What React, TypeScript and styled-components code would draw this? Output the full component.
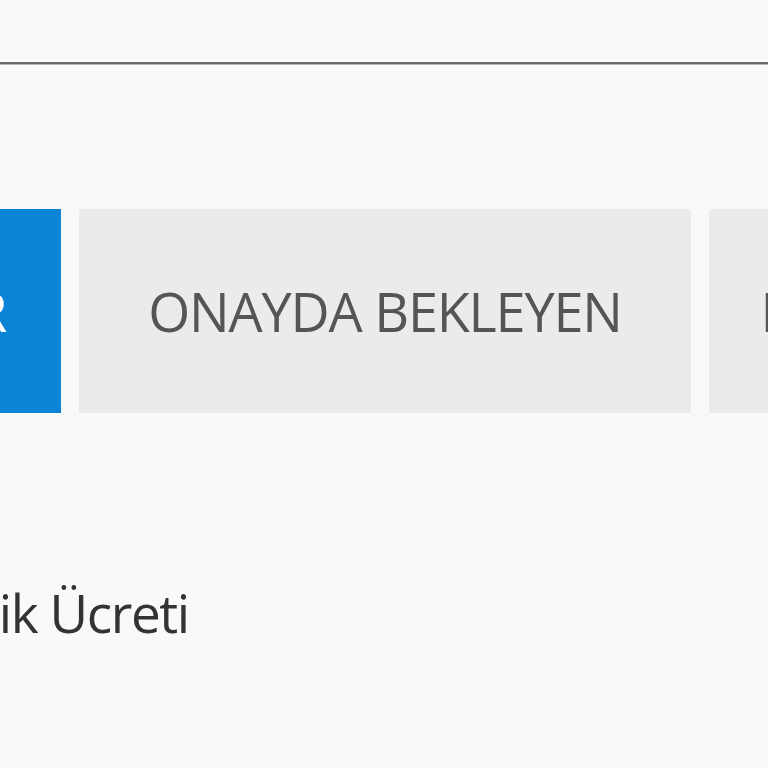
import React from 'react';
import styled, { createGlobalStyle } from 'styled-components';

const GlobalStyle = createGlobalStyle`
  html, body {
    margin: 0;
    padding: 0;
    background: #f9f9f9;
    overflow: hidden;
  }
  body {
    font-family: "Open Sans", "Liberation Sans", sans-serif;
  }
`;

const Page = styled.div`
  width: 768px;
  height: 768px;
  overflow: hidden;
  background: #f9f9f9;
`;

const TopBar = styled.div`
  height: 62px;
  border-bottom: 2px solid #6a6a6a;
  box-shadow: 0 1px 0 #b5b5b5;
  background: #fafafa;
`;

const TabRow = styled.div`
  display: flex;
  gap: 18px;
  margin: 145px 0 0 -551px;
  width: max-content;
`;

const Tab = styled.div<{ $active?: boolean }>`
  width: 612px;
  height: 204px;
  display: flex;
  align-items: center;
  justify-content: center;
  font-size: 54px;
  letter-spacing: -1.2px;
  background: ${p => (p.$active ? '#0b84d6' : '#ebebeb')};
  color: ${p => (p.$active ? '#ffffff' : '#555555')};
  white-space: nowrap;
`;

const Label = styled.div`
  margin: 163px 0 0 -104px;
  font-size: 53px;
  letter-spacing: -1.4px;
  color: #333333;
  white-space: nowrap;
`;

const App: React.FC = () => {
  const tabs = [
    { id: 1, title: 'YAYINDAKİ KAYITLAR', active: true },
    { id: 2, title: 'ONAYDA BEKLEYEN' },
    { id: 3, title: 'BİLDİRİLEN KAYITLAR' }
  ];

  return (
    <Page>
      <GlobalStyle />
      <TopBar />
      <TabRow>
        {tabs.map(tab => (
          <Tab key={tab.id} $active={tab.active}>
            {tab.title}
          </Tab>
        ))}
      </TabRow>
      <Label>Üyelik Ücreti</Label>
    </Page>
  );
};

export default App;
